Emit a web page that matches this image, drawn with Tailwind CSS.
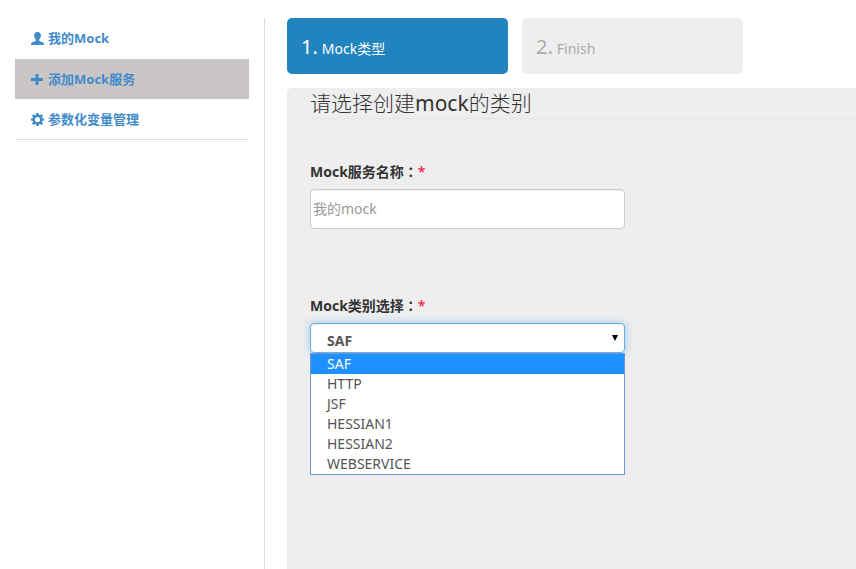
<!DOCTYPE html>
<html lang="zh-CN">
<head>
<meta charset="utf-8">
<meta name="viewport" content="width=device-width, initial-scale=1">
<title>添加Mock服务</title>
<script src="https://cdn.jsdelivr.net/npm/@tailwindcss/browser@4"></script>
</head>
<body class="flex min-h-screen bg-white pt-[18px] font-['Noto_Sans','Noto_Sans_CJK_SC',sans-serif] text-sm text-[#333]">
  <aside class="w-[265px] shrink-0 border-r border-[#ddd] px-[15px]">
    <nav class="border-b border-[#ddd] text-[13px] leading-5 font-bold text-[#428bca]">
      <a href="#mine" class="flex h-10 items-center gap-1 px-4">
        <svg class="size-[13px] shrink-0" viewBox="0 0 13 13" fill="currentColor" aria-hidden="true"><path d="M6.500 0C4.300 0 3.100 1.300 3.100 3.300c0 1.800.7 3.200 1.700 4.100v1.400C4.500 9.600.8 10.100.2 11.200L0 13h13l-.2-1.800c-.6-1.100-4.300-1.600-4.600-2.400V7.400c1-.9 1.700-2.300 1.700-4.100C9.900 1.300 8.700 0 6.500 0z"/></svg>
        <span>我的Mock</span>
      </a>
      <a href="#add" aria-current="page" class="mt-px flex h-10 items-center gap-1 bg-[#cac6c5] px-4">
        <svg class="size-[13px] shrink-0" viewBox="0 0 13 13" fill="currentColor" aria-hidden="true"><path d="M4.500 1h3v4H12v3H7.500v4h-3V8H0V5h4.500z"/></svg>
        <span>添加Mock服务</span>
      </a>
      <a href="#params" class="flex h-10 items-center gap-1 px-4">
        <svg class="size-[13px] shrink-0" viewBox="0 0 13 13" fill="currentColor" fill-rule="evenodd" aria-hidden="true"><path d="M5.400 0h2.200l.4 1.800 1 .4L10.600 1.200 12 2.700 10.900 4.200l.4 1 1.700.3v2.100l-1.700.3-.4 1 1.100 1.500-1.400 1.500L9 10.900l-1 .4L7.600 13H5.400L5 11.300l-1-.4-1.600 1L1 10.400l1.100-1.500-.4-1L0 7.600V5.500l1.700-.3.4-1L1 2.700l1.400-1.500L4 2.200l1-.4zM6.500 3.900a2.600 2.600 0 1 0 0 5.200 2.600 2.600 0 0 0 0-5.200z"/></svg>
        <span>参数化变量管理</span>
      </a>
    </nav>
  </aside>

  <main class="ml-[22px] flex min-w-0 flex-1 flex-col">
    <ol class="flex gap-[14px]">
      <li><a href="#type" aria-current="step" class="flex h-14 w-[221px] items-baseline gap-1 rounded-[5px] bg-[#2184be] px-[14px] pt-[15px] leading-7 text-white"><span class="text-xl leading-7">1.</span><span>Mock类型</span></a></li>
      <li><a href="#finish" class="flex h-14 w-[221px] items-baseline gap-1 rounded-[5px] bg-[#eee] px-[14px] pt-[15px] leading-7 text-[#aaa]"><span class="text-xl leading-7">2.</span><span>Finish</span></a></li>
    </ol>

    <form class="mt-[14px] flex-1 rounded-tl-[5px] bg-[#eee] pl-[23px]">
      <h2 class="h-[31px] border-b border-[#e5e5e5] text-[21px] leading-[30px] font-light">请选择创建<span class="font-normal">mock</span>的类别</h2>

      <div class="mt-[42px] w-[315px]">
        <label for="mock-name" class="block h-7 leading-5 font-bold">Mock服务名称<span class="font-['Noto_Sans_CJK_TC',sans-serif]" lang="zh-TW">：</span><span class="font-normal text-[#f03]">*</span></label>
        <input id="mock-name" type="text" placeholder="我的mock" class="block h-10 w-full rounded-[4px] border border-[#ccc] bg-white px-0.5 pb-0.5 text-sm leading-5 shadow-[inset_0_1px_1px_rgba(0,0,0,0.075)] placeholder:text-[#999]">
      </div>

      <div class="relative mt-[66px] w-[315px]">
        <label for="mock-type" class="block h-7 leading-5 font-bold">Mock类别选择<span class="font-['Noto_Sans_CJK_TC',sans-serif]" lang="zh-TW">：</span><span class="font-normal text-[#f03]">*</span></label>
        <div class="relative">
          <select id="mock-type" class="block h-[30px] w-full appearance-none rounded-[4px] border border-[#66afe9] bg-white px-4 pt-1.5 text-sm leading-5 font-bold text-[#555] shadow-[inset_0_1px_1px_rgba(0,0,0,0.075),0_0_8px_rgba(102,175,233,0.6)] outline-none">
            <option>SAF</option>
            <option>HTTP</option>
            <option>JSF</option>
            <option>HESSIAN1</option>
            <option>HESSIAN2</option>
            <option>WEBSERVICE</option>
          </select>
          <svg class="pointer-events-none absolute top-3 right-[7px] h-[6px] w-[6px]" viewBox="0 0 6 6" aria-hidden="true"><path d="M0 0h6L3 6z"/></svg>
        </div>
        <ul role="listbox" aria-label="Mock类别选择" class="absolute top-full left-0 w-full border border-[#6f97d2] bg-white leading-5 text-[#555]">
          <li role="option" aria-selected="true" class="bg-[#1e90ff] px-4 text-white">SAF</li>
          <li role="option" aria-selected="false" class="px-4">HTTP</li>
          <li role="option" aria-selected="false" class="px-4">JSF</li>
          <li role="option" aria-selected="false" class="px-4">HESSIAN1</li>
          <li role="option" aria-selected="false" class="px-4">HESSIAN2</li>
          <li role="option" aria-selected="false" class="px-4">WEBSERVICE</li>
        </ul>
      </div>
    </form>
  </main>
</body>
</html>
